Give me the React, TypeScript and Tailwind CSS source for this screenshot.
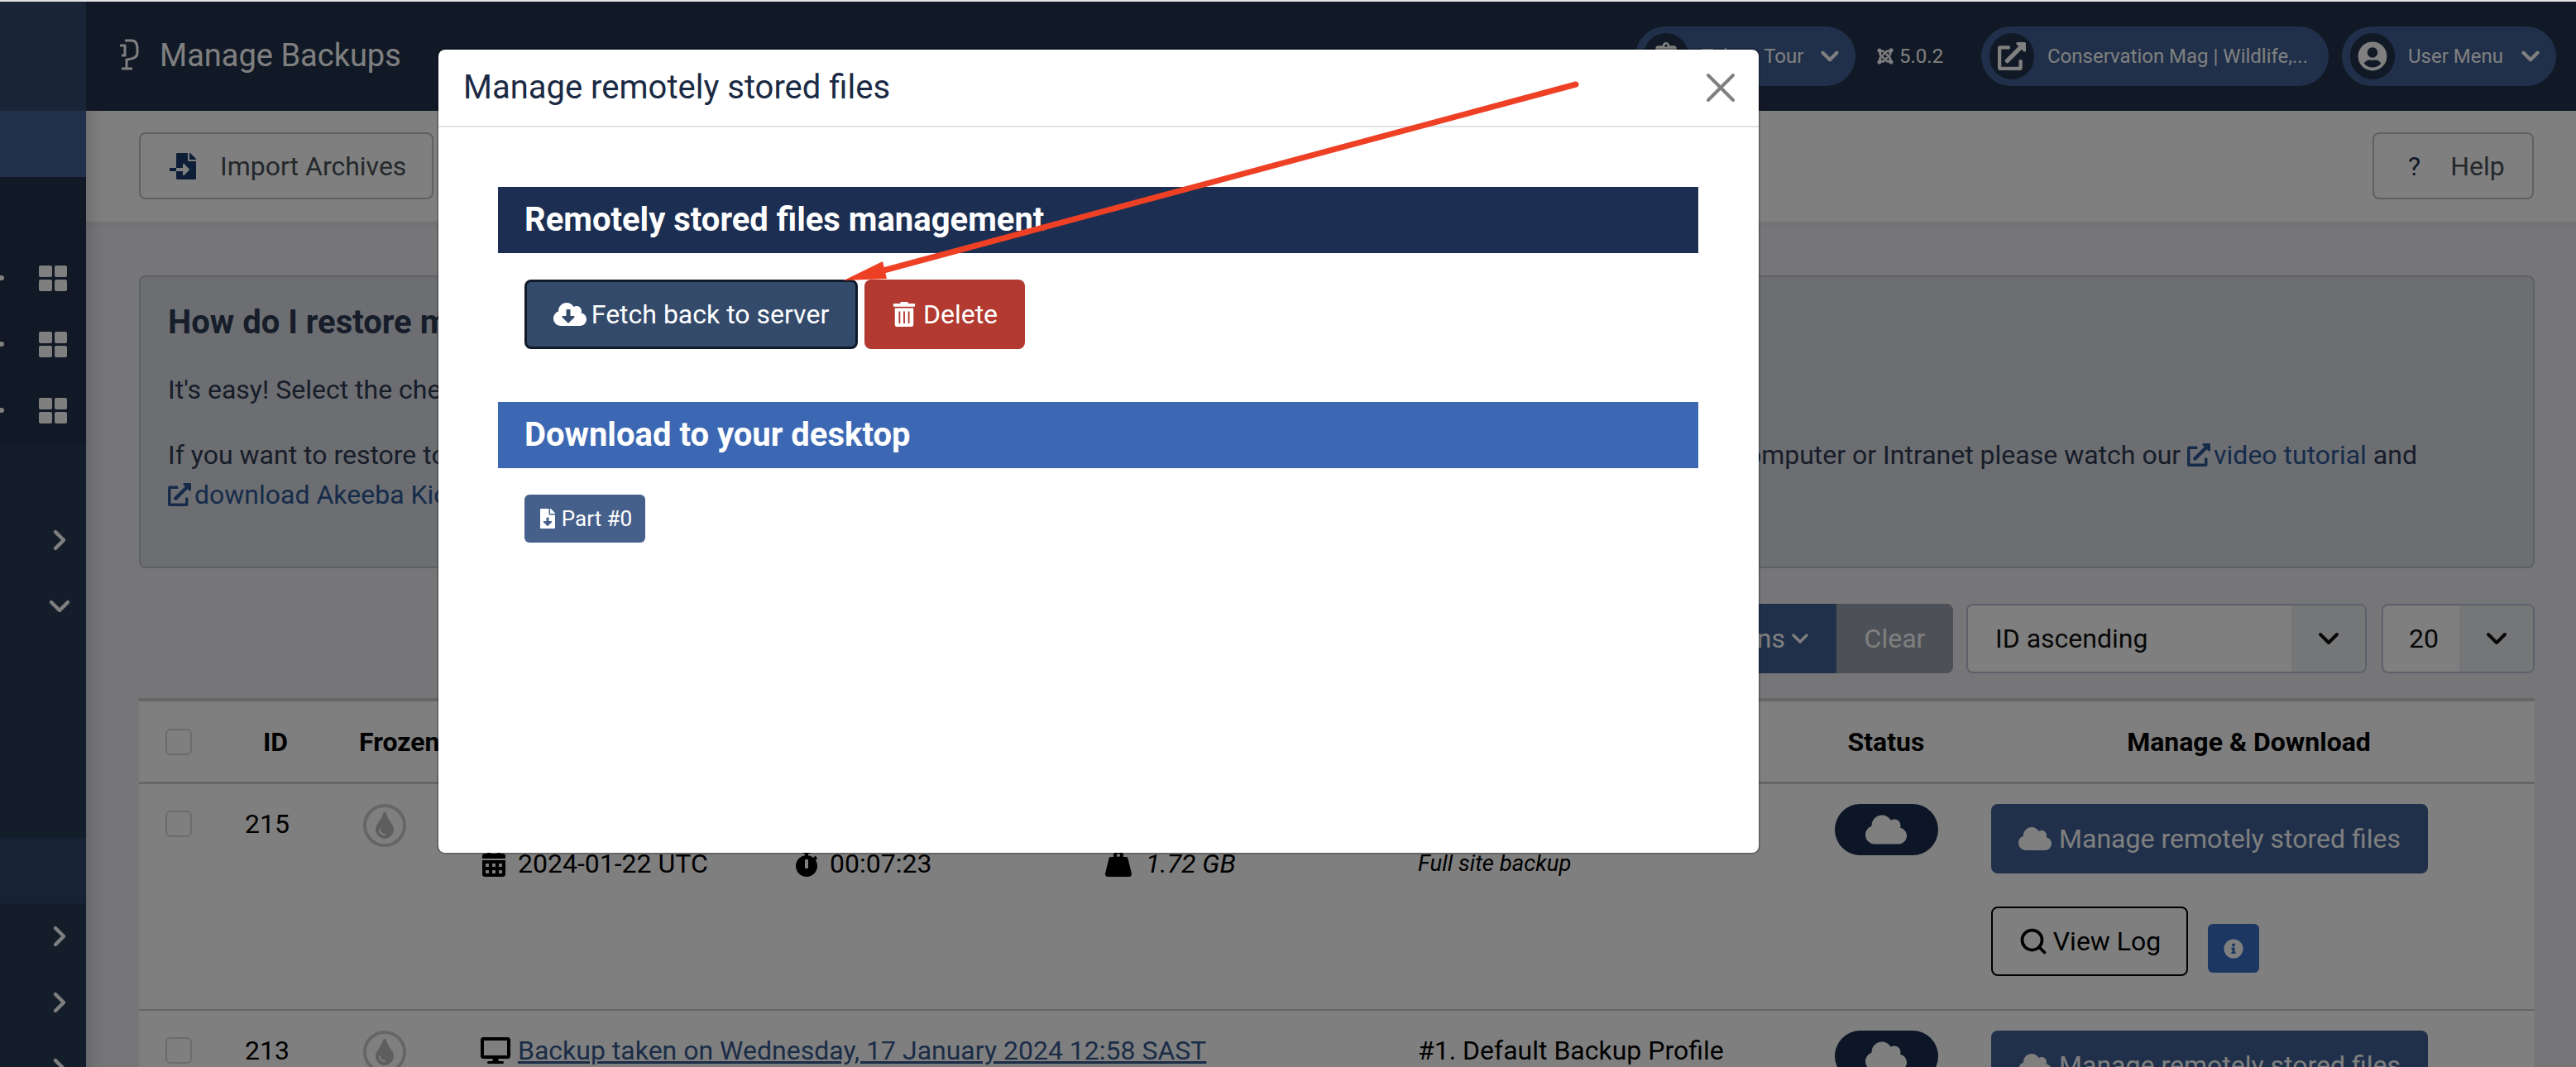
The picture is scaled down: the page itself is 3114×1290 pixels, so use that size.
import { ChevronDown, ChevronRight, Search } from 'lucide-react';
import {
  FaCalendarAlt,
  FaCloud,
  FaCloudDownloadAlt,
  FaDesktop,
  FaExternalLinkAlt,
  FaFileDownload,
  FaFileImport,
  FaInfoCircle,
  FaJoomla,
  FaStopwatch,
  FaTint,
  FaTrashAlt,
  FaUserCircle,
  FaWeightHanging,
  FaClipboardList,
} from 'react-icons/fa';

function GridIcon() {
  return (
    <div className="grid grid-cols-2 gap-[3px] w-[34px]">
      <span className="h-[14px] rounded-[2px] bg-white" />
      <span className="h-[14px] rounded-[2px] bg-white" />
      <span className="h-[14px] rounded-[2px] bg-white" />
      <span className="h-[14px] rounded-[2px] bg-white" />
    </div>
  );
}

function Sidebar() {
  const gridRow = (
    <div className="h-[80px] flex items-center justify-between pl-0 pr-[23px]">
      <span className="w-[5px] h-[6px] rounded-r-full bg-white" />
      <GridIcon />
    </div>
  );
  const chevronRow = (
    <div className="h-[80px] flex items-center justify-end pr-[12px] text-white">
      <ChevronRight size={40} strokeWidth={2.6} />
    </div>
  );
  return (
    <aside className="w-[104px] shrink-0 flex flex-col bg-[#283c56] relative z-10 shadow-[0_0_24px_rgba(0,0,0,0.25)]">
      <div className="h-[132px] bg-[#324a6c]" />
      <div className="h-[80px] bg-[#406094]" />
      <div className="bg-[#22324c] pt-[82px]">
        {gridRow}
        {gridRow}
        {gridRow}
      </div>
      <div className="h-[77px]" />
      {chevronRow}
      <div className="h-[80px] flex items-center justify-end pr-[12px] text-white">
        <ChevronDown size={40} strokeWidth={2.6} />
      </div>
      <div className="h-[240px]" />
      <div className="h-[79px] bg-[#30446a]" />
      {chevronRow}
      {chevronRow}
      {chevronRow}
    </aside>
  );
}

function Pill({ className, circle, label, chevron }: { className: string; circle: React.ReactNode; label: string; chevron?: boolean }) {
  return (
    <div className={`h-[72px] rounded-full bg-[#406094] flex items-center pl-[10px] pr-[14px] text-white text-[24px] ${className}`}>
      <span className="w-[54px] h-[56px] rounded-full bg-[#22324c] flex items-center justify-center shrink-0">{circle}</span>
      <span className="ml-[16px] whitespace-nowrap flex-1">{label}</span>
      {chevron && <ChevronDown size={34} strokeWidth={3} />}
    </div>
  );
}

function Header() {
  return (
    <header className="h-[132px] bg-[#22324c] flex items-center relative z-20 pr-[24px]">
      <svg viewBox="0 0 24 38" className="ml-[40px] w-[24px] h-[38px] text-white mb-[4px]" fill="none" stroke="currentColor" strokeWidth="3">
        <path d="M7 2h8c6 0 7 5 7 10v5c0 5-4 7-13 8" />
        <path d="M9 24v12M3 36h13" />
        <path d="M1 8h6v12H3" />
      </svg>
      <h1 className="ml-[25px] text-[38px] text-white font-normal mb-[2px]">Manage Backups</h1>
      <div className="ml-auto flex items-center">
        <Pill className="w-[266px]" circle={<FaClipboardList size={34} />} label="Take a Tour" chevron />
        <div className="w-[152px] flex items-center pl-[25px] text-[24px] text-white">
          <FaJoomla size={22} className="mr-[6px]" />
          5.0.2
        </div>
        <Pill className="w-[420px]" circle={<FaExternalLinkAlt size={34} />} label="Conservation Mag | Wildlife,..." />
        <Pill className="w-[259px] ml-[16px]" circle={<FaUserCircle size={36} />} label="User Menu" chevron />
      </div>
    </header>
  );
}

function Toolbar() {
  return (
    <div className="h-[134px] bg-white flex items-start justify-between pt-[26px] pl-[64px] pr-[51px] shadow-[0_4px_10px_rgba(0,0,0,0.04)] relative">
      <button className="w-[356px] h-[81px] border-[2px] border-[#bcc0c8] rounded-[8px] flex items-center pl-[35px] text-[32px] text-[#495057]">
        <FaFileImport size={32} className="text-[#1c3d6e] mr-[29px]" />
        Import Archives
      </button>
      <button className="w-[195px] h-[81px] border-[2px] border-[#bcc0c8] rounded-[8px] flex items-center pl-[41px] text-[32px] text-[#495057]">
        <span className="text-[#22324c] mr-[36px]">?</span>
        Help
      </button>
    </div>
  );
}

function InfoBox() {
  return (
    <div className="h-[354px] border-[2px] border-[#bac0cc] rounded-[8px] bg-[#d9dde4] px-[33px] pt-[28px] text-[#2e3a52] text-[32px] leading-[48px]">
      <h3 className="text-[40px] font-bold leading-[54px] mb-[30px]">How do I restore my backups?</h3>
      <p className="mb-[31px]">It's easy! Select the checkbox next to the backup and click the Restore button in the toolbar.</p>
      <p className="whitespace-nowrap">
        If you want to restore to a different server or location, or if you want to transfer your site between a live web server and your own local computer or Intranet please watch our{' '}
        <a className="text-[#2d5794]"><FaExternalLinkAlt size={28} className="inline align-[-3px] mr-[4px]" />video tutorial</a> and
        <br />
        <a className="text-[#2d5794]"><FaExternalLinkAlt size={28} className="inline align-[-3px] mr-[4px]" />download Akeeba Kickstart</a>
      </p>
    </div>
  );
}

function FilterBar() {
  return (
    <div className="mt-[43px] h-[84px] flex justify-end text-[32px]">
      <button className="w-[300px] bg-[#406094] text-white rounded-l-[8px] flex items-center justify-end pr-[28px] gap-[2px]">
        Search Options
        <ChevronDown size={32} strokeWidth={2.5} />
      </button>
      <button className="w-[141px] bg-[#9ca0ae] text-white rounded-r-[8px]">Clear</button>
      <div className="ml-[16px] w-[484px] border-[2px] border-[#b6c0d4] rounded-[8px] flex bg-white text-[#111]">
        <span className="flex-1 pl-[33px] flex items-center">ID ascending</span>
        <span className="w-[89px] bg-[#eaedf1] rounded-r-[6px] flex items-center justify-center"><ChevronDown size={40} strokeWidth={2.4} /></span>
      </div>
      <div className="ml-[18px] w-[185px] border-[2px] border-[#b6c0d4] rounded-[8px] flex bg-white text-[#111]">
        <span className="flex-1 pl-[31px] flex items-center">20</span>
        <span className="w-[89px] bg-[#eaedf1] rounded-r-[6px] flex items-center justify-center"><ChevronDown size={40} strokeWidth={2.4} /></span>
      </div>
    </div>
  );
}

const cols = 'grid grid-cols-[128px_114px_171px_1133px_474px_184px_35px_1fr]';

function Checkbox() {
  return <span className="block w-[32px] h-[32px] border-[2px] border-[#d6d6d6] rounded-[6px] bg-white" />;
}

function StatusCol() {
  return (
    <div className="flex justify-center">
      <span className="w-[125px] h-[62px] rounded-[31px] bg-[#182c4c] flex items-center justify-center text-white">
        <FaCloud size={50} />
      </span>
    </div>
  );
}

function FrozenCol() {
  return (
    <div className="pl-[29px]">
      <span className="w-[52px] h-[52px] rounded-full border-[4px] border-[#ccc] flex items-center justify-center text-[#bdbdbd]">
        <FaTint size={32} />
      </span>
    </div>
  );
}

function ManageButton() {
  return (
    <button className="w-[528px] h-[84px] rounded-[8px] bg-[#406094] text-white text-[32px] flex items-center justify-center gap-[9px]">
      <FaCloud size={40} />
      Manage remotely stored files
    </button>
  );
}

function Table() {
  return (
    <div className="mt-[30px] bg-white border-t-[4px] border-[#ccc] text-black text-[32px]">
      <div className={`${cols} h-[100px] items-center border-b-[3px] border-[#ccc] font-bold`}>
        <div className="pl-[32px]"><Checkbox /></div>
        <div className="pl-[22px]">ID</div>
        <div className="pl-[24px]">Frozen</div>
        <div>Description</div>
        <div>Backup Profile</div>
        <div className="text-center">Status</div>
        <div />
        <div className="pr-[34px] text-center">Manage &amp; Download</div>
      </div>

      <div className={`${cols} h-[274px] border-b-[2px] border-[#ccc] pt-[24px] leading-[48px]`}>
        <div className="pl-[32px] pt-[8px]"><Checkbox /></div>
        <div>215</div>
        <FrozenCol />
        <div>
          <div className="flex items-center">
            <FaDesktop size={36} className="mr-[9px]" />
            <a className="text-[#36598f] underline">Backup taken on Monday, 22 January 2024 14:10 SAST</a>
          </div>
          <div className="flex">
            <span className="w-[378px] flex items-center"><FaCalendarAlt size={32} className="mr-[13px]" />2024-01-22 UTC</span>
            <span className="w-[377px] flex items-center"><FaStopwatch size={32} className="mr-[12px]" />00:07:23</span>
            <span className="flex items-center italic"><FaWeightHanging size={32} className="mr-[17px]" />1.72 GB</span>
          </div>
        </div>
        <div>
          <div>#1. Default Backup Profile</div>
          <div className="italic text-[27.5px]">Full site backup</div>
        </div>
        <StatusCol />
        <div />
        <div>
          <ManageButton />
          <div className="mt-[40px] flex items-end gap-[24px]">
            <button className="w-[238px] h-[84px] rounded-[8px] border-[2px] border-black text-[32px] flex items-center justify-center gap-[6px]">
              <Search size={36} strokeWidth={2.5} />
              View Log
            </button>
            <span className="w-[62px] h-[59px] mb-[4px] rounded-[6px] bg-[#386ec4] text-white flex items-center justify-center">
              <FaInfoCircle size={24} />
            </span>
          </div>
        </div>
      </div>

      <div className={`${cols} pt-[24px] leading-[48px]`}>
        <div className="pl-[32px] pt-[8px]"><Checkbox /></div>
        <div>213</div>
        <FrozenCol />
        <div className="flex items-center h-[48px]">
          <FaDesktop size={36} className="mr-[9px]" />
          <a className="text-[#36598f] underline">Backup taken on Wednesday, 17 January 2024 12:58 SAST</a>
        </div>
        <div>#1. Default Backup Profile</div>
        <StatusCol />
        <div />
        <ManageButton />
      </div>
    </div>
  );
}

function Modal() {
  return (
    <div className="absolute left-[528px] top-[58px] w-[1600px] h-[975px] bg-white bg-clip-padding rounded-[10px] border-[2px] border-black/20 z-40">
      <div className="h-[94px] border-b-[2px] border-[#dee2e6] flex items-center justify-between pl-[30px] pr-[29px]">
        <h2 className="text-[40px] text-[#1b2a44] font-normal">Manage remotely stored files</h2>
        <svg viewBox="0 0 34 34" className="w-[34px] h-[34px] text-[#808080]" stroke="currentColor" strokeWidth="4" strokeLinecap="round">
          <path d="M2 2l30 30M32 2L2 32" />
        </svg>
      </div>
      <div className="pl-[72px] pr-[73px] pt-[72px]">
        <h3 className="h-[80px] bg-[#1c2f52] text-white text-[40px] font-bold flex items-center pl-[32px]">Remotely stored files management</h3>
        <div className="mt-[32px] pl-[32px] flex gap-[8px]">
          <button className="w-[403px] h-[84px] rounded-[8px] bg-[#344a6b] border-[3px] border-[#111a2b] text-white text-[32px] flex items-center justify-center gap-[6px]">
            <FaCloudDownloadAlt size={40} />
            Fetch back to server
          </button>
          <button className="w-[194px] h-[84px] rounded-[8px] bg-[#b23a30] text-white text-[32px] flex items-center justify-center gap-[8px]">
            <FaTrashAlt size={30} />
            Delete
          </button>
        </div>
        <h3 className="mt-[64px] h-[80px] bg-[#3c68b3] text-white text-[40px] font-bold flex items-center pl-[32px]">Download to your desktop</h3>
        <div className="mt-[32px] pl-[32px]">
          <button className="w-[146px] h-[58px] rounded-[6px] bg-[#46608c] text-white text-[26px] flex items-center justify-center gap-[5px]">
            <FaFileDownload size={24} />
            Part #0
          </button>
        </div>
      </div>
    </div>
  );
}

export default function App() {
  return (
    <div className="relative w-[3114px] h-[1290px] overflow-hidden font-[Roboto,sans-serif] bg-[#e5e7eb]">
      <div className="absolute inset-x-0 top-0 h-[2px] bg-[#e2e4e6] z-50" />
      <div className="flex pt-[2px]">
        <Sidebar />
        <div className="flex-1 flex flex-col bg-[#ecedf2] min-w-0">
          <Header />
          <Toolbar />
          <main className="pt-[65px] pl-[64px] pr-[50px]">
            <InfoBox />
            <FilterBar />
            <Table />
          </main>
        </div>
      </div>
      {/* modal backdrop */}
      <div className="absolute inset-x-0 top-[2px] bottom-0 bg-black/50 z-30" />
      <Modal />
      {/* annotation drawn on the screenshot */}
      <svg className="absolute inset-0 z-50 pointer-events-none" width="3114" height="1290" viewBox="0 0 3114 1290">
        <path d="M1905 102L1068 327" stroke="#ee4025" strokeWidth="7" strokeLinecap="round" />
        <polygon points="1020,339 1067,316 1072,337" fill="#ee4025" />
      </svg>
    </div>
  );
}
